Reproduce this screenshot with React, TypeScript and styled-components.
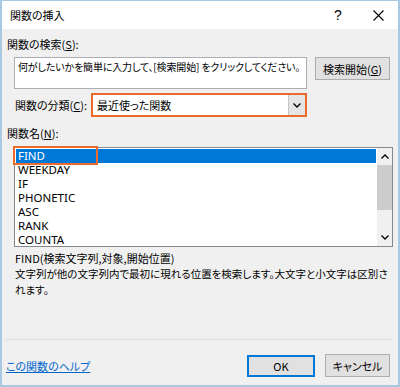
import React from "react";
import styled, { createGlobalStyle } from "styled-components";

const GlobalStyle = createGlobalStyle`
  html, body { margin: 0; padding: 0; background: #fff; }
  body {
    font-family: "Noto Sans CJK JP", "Noto Sans", sans-serif;
    font-size: 11px;
    font-feature-settings: "palt";
    color: #000;
  }
`;

const Window = styled.div`
  width: 400px;
  height: 387px;
  box-sizing: border-box;
  border: 2px solid #a9c9e3;
  border-top-width: 1px;
  display: flex;
  flex-direction: column;
  background: #f0f0f0;
`;

const TitleBar = styled.div`
  height: 28px;
  background: #fff;
  display: flex;
  align-items: center;
  padding-left: 8px;
`;

const TitleText = styled.div`
  flex: 1;
  line-height: 16px;
`;

const CaptionButton = styled.div`
  width: 40px;
  height: 28px;
  display: flex;
  align-items: center;
  justify-content: center;
  font-size: 14px;
  font-family: "Liberation Sans", sans-serif;
`;

const Body = styled.div`
  flex: 1;
  display: flex;
  flex-direction: column;
  padding: 0 5px;
`;

const Label = styled.div<{ $mt: number; $pl?: number }>`
  margin-top: ${(p) => p.$mt}px;
  padding-left: ${(p) => p.$pl ?? 0}px;
  line-height: 16px;
`;

const SearchRow = styled.div`
  display: flex;
  margin-top: 5px;
  padding-left: 7px;
  gap: 8px;
`;

const SearchBox = styled.div`
  width: 293px;
  height: 32px;
  box-sizing: border-box;
  border: 1px solid #abadb3;
  background: #fff;
  padding: 1px 3px;
  line-height: 16px;
  white-space: nowrap;
  overflow: hidden;
  font-size: 10px;
  letter-spacing: -0.15px;
`;

const Button = styled.div<{ $w: number; $default?: boolean }>`
  width: ${(p) => p.$w}px;
  height: ${(p) => (p.$default ? 22 : 23)}px;
  box-sizing: border-box;
  background: #e1e1e1;
  border: 1px solid ${(p) => (p.$default ? "#0078d7" : "#adadad")};
  box-shadow: ${(p) => (p.$default ? "inset 0 0 0 1px #0078d7" : "none")};
  display: flex;
  align-items: center;
  justify-content: center;
  line-height: 16px;
  white-space: nowrap;
`;

const CategoryRow = styled.div`
  display: flex;
  align-items: center;
  margin-top: 4px;
  padding-left: 8px;
`;

const CategoryLabel = styled.div`
  width: 76px;
  line-height: 16px;
  white-space: nowrap;
`;

const OrangeFrame = styled.div`
  width: 216px;
  height: 24px;
  box-sizing: border-box;
  border: 2px solid #ec6a2b;
  display: flex;
`;

const SelectBox = styled.div`
  flex: 1;
  display: flex;
  background: #fff;
`;

const SelectText = styled.div`
  flex: 1;
  padding-left: 4px;
  line-height: 20px;
`;

const SelectArrow = styled.div`
  width: 16px;
  background: #e5e5e5;
  border-left: 1px solid #c4c4c4;
  display: flex;
  align-items: center;
  justify-content: center;
`;

const ListBox = styled.div`
  position: relative;
  margin-top: 6px;
  margin-left: 7px;
  width: 379px;
  height: 100px;
  box-sizing: border-box;
  border: 1px solid #828790;
  background: #fff;
  display: flex;
`;

const ListItems = styled.div`
  flex: 1;
  padding: 1px 1px;
`;

const ListRow = styled.div<{ $selected?: boolean }>`
  height: 14px;
  line-height: 14px;
  padding-left: 2px;
  font-family: "Noto Sans", sans-serif;
  font-size: 11.5px;
  background: ${(p) => (p.$selected ? "#0078d7" : "transparent")};
  color: ${(p) => (p.$selected ? "#fff" : "#000")};
`;

const RowMark = styled.div`
  position: absolute;
  left: -2px;
  top: -2px;
  width: 85px;
  height: 19px;
  box-sizing: border-box;
  border: 2px solid #ec6a2b;
`;

const ScrollBar = styled.div`
  width: 15px;
  background: #f0f0f0;
  display: flex;
  flex-direction: column;
`;

const ScrollArrow = styled.div`
  height: 17px;
  display: flex;
  align-items: center;
  justify-content: center;
`;

const ScrollThumb = styled.div`
  height: 45px;
  background: #cdcdcd;
`;

const ScrollTrack = styled.div`
  flex: 1;
`;

const Syntax = styled.div`
  margin-top: 3px;
  padding-left: 8px;
  line-height: 16px;
`;

const Description = styled.div`
  padding-left: 8px;
  padding-right: 4px;
  line-height: 16px;
  font-size: 10.5px;
`;

const Footer = styled.div`
  margin-top: auto;
  display: flex;
  flex-direction: column;
`;

const Separator = styled.div`
  height: 1px;
  background: #dcdcdc;
  margin-left: -1px;
`;

const FooterRow = styled.div`
  display: flex;
  align-items: center;
  margin-top: 14px;
  padding-bottom: 8px;
  padding-right: 3px;
  gap: 10px;
`;

const HelpLink = styled.a`
  margin-left: -1px;
  margin-right: auto;
  color: #0066cc;
  text-decoration: underline;
  line-height: 16px;
`;

const Chevron = ({ up }: { up?: boolean }) => (
  <svg width="8" height="5" viewBox="0 0 8 5">
    <path
      d={up ? "M0.5 4.5 L4 1 L7.5 4.5" : "M0.5 0.5 L4 4 L7.5 0.5"}
      fill="none"
      stroke="#000"
      strokeWidth="1.3"
    />
  </svg>
);

const items = ["FIND", "WEEKDAY", "IF", "PHONETIC", "ASC", "RANK", "COUNTA"];

export default function App() {
  return (
    <>
      <GlobalStyle />
      <Window>
        <TitleBar>
          <TitleText>関数の挿入</TitleText>
          <CaptionButton>?</CaptionButton>
          <CaptionButton>
            <svg width="11" height="11" viewBox="0 0 11 11">
              <path d="M0.5 0.5 L10.5 10.5 M10.5 0.5 L0.5 10.5" stroke="#000" strokeWidth="1.1" />
            </svg>
          </CaptionButton>
        </TitleBar>
        <Body>
          <Label $mt={7}>
            関数の検索(<u>S</u>):
          </Label>
          <SearchRow>
            <SearchBox>何がしたいかを簡単に入力して、[検索開始] をクリックしてください。</SearchBox>
            <Button $w={75}>
              検索開始(<u>G</u>)
            </Button>
          </SearchRow>
          <CategoryRow>
            <CategoryLabel>
              関数の分類(<u>C</u>):
            </CategoryLabel>
            <OrangeFrame>
              <SelectBox>
                <SelectText>最近使った関数</SelectText>
                <SelectArrow>
                  <Chevron />
                </SelectArrow>
              </SelectBox>
            </OrangeFrame>
          </CategoryRow>
          <Label $mt={8}>
            関数名(<u>N</u>):
          </Label>
          <ListBox>
            <ListItems>
              {items.map((it, i) => (
                <ListRow key={it} $selected={i === 0}>
                  {it}
                </ListRow>
              ))}
            </ListItems>
            <ScrollBar>
              <ScrollArrow>
                <Chevron up />
              </ScrollArrow>
              <ScrollThumb />
              <ScrollTrack />
              <ScrollArrow>
                <Chevron />
              </ScrollArrow>
            </ScrollBar>
            <RowMark />
          </ListBox>
          <Syntax>FIND(検索文字列,対象,開始位置)</Syntax>
          <Description>
            文字列が他の文字列内で最初に現れる位置を検索します。大文字と小文字は区別されます。
          </Description>
          <Footer>
            <Separator />
            <FooterRow>
              <HelpLink href="#">この関数のヘルプ</HelpLink>
              <Button $w={68} $default>
                OK
              </Button>
              <Button $w={65}>キャンセル</Button>
            </FooterRow>
          </Footer>
        </Body>
      </Window>
    </>
  );
}
